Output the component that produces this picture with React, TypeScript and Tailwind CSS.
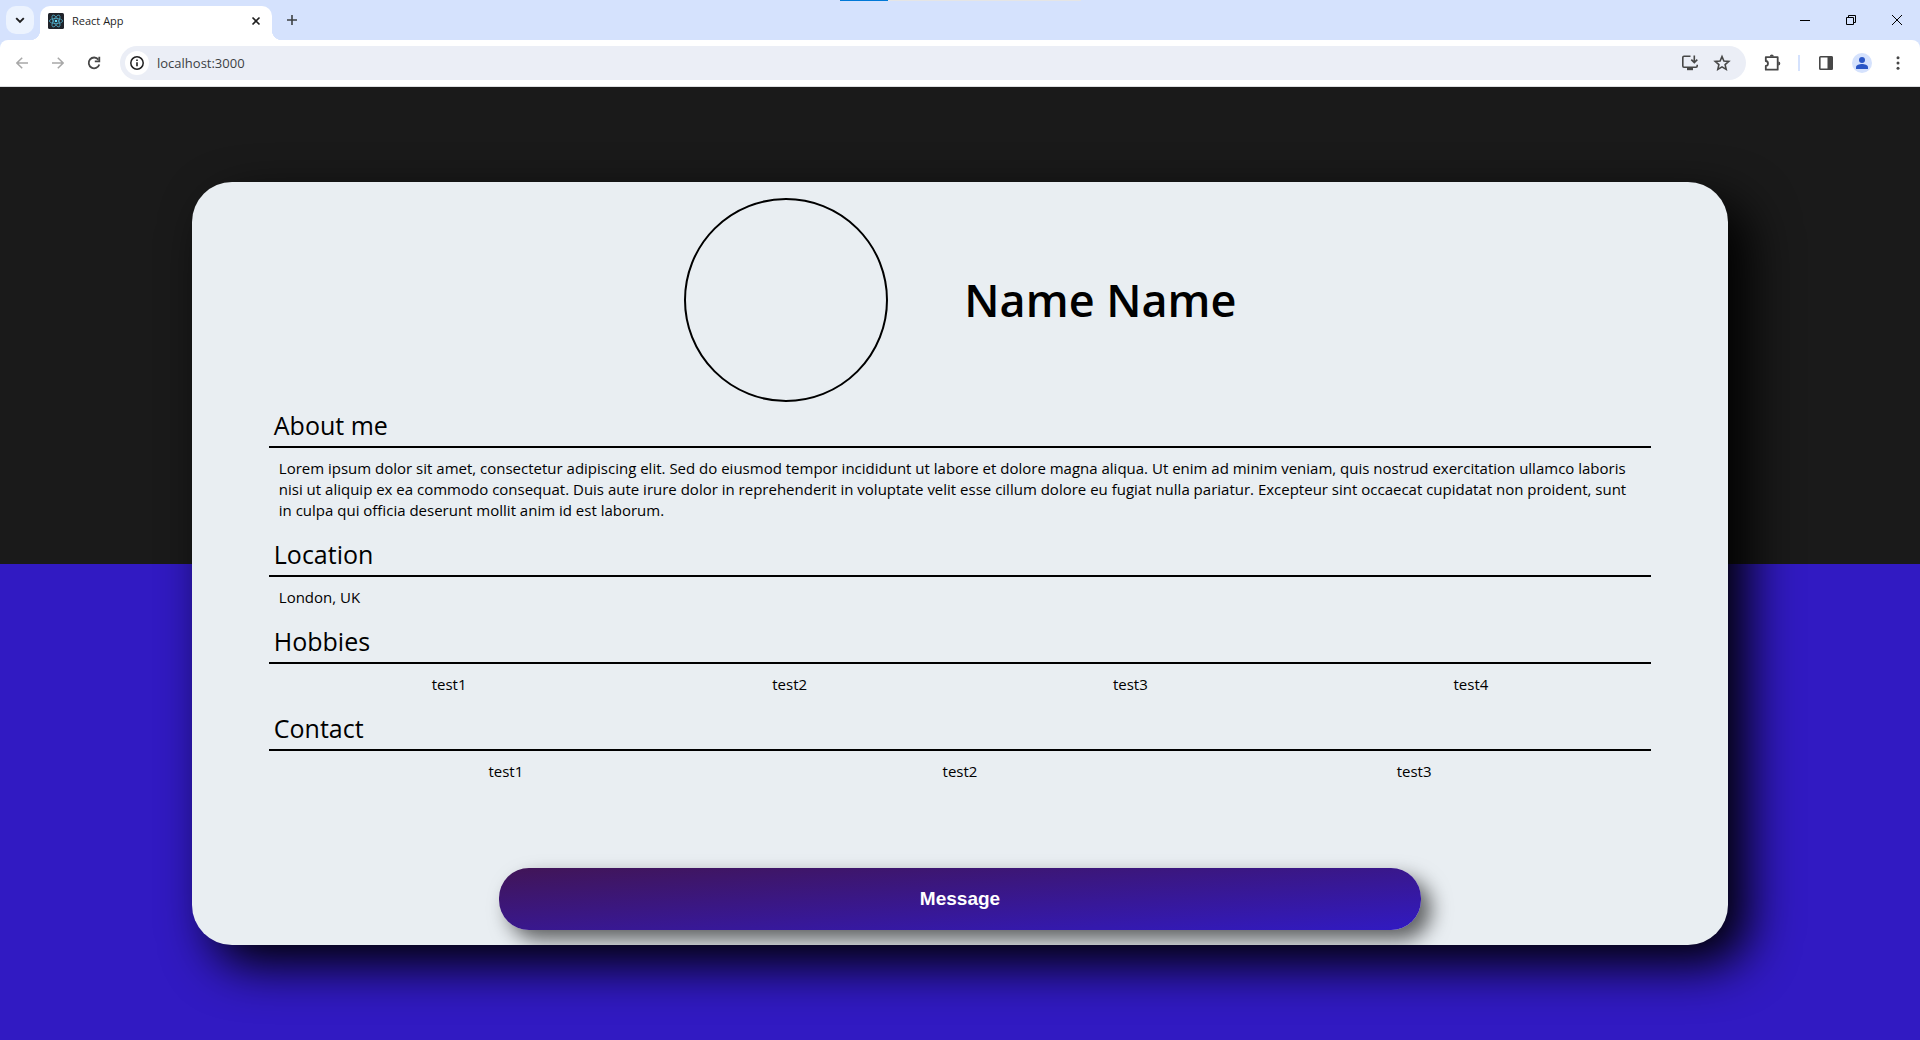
import type { ReactNode } from "react";

const hobbies = ["test1", "test2", "test3", "test4"];
const contacts = ["test1", "test2", "test3"];

function ReactLogo() {
  return (
    <svg className="size-4 shrink-0" viewBox="0 0 16 16" fill="none" aria-hidden="true">
      <rect width="16" height="16" rx="1.5" fill="#20232a" />
      <g stroke="#4fa9c4" strokeWidth="0.8">
        <ellipse cx="8" cy="8" rx="6.6" ry="2.6" />
        <ellipse cx="8" cy="8" rx="6.6" ry="2.6" transform="rotate(60 8 8)" />
        <ellipse cx="8" cy="8" rx="6.6" ry="2.6" transform="rotate(120 8 8)" />
      </g>
      <circle cx="8" cy="8" r="1.3" fill="#61dafb" />
    </svg>
  );
}

function TabStrip() {
  return (
    <div className="relative flex h-10 items-end bg-[#d5e2fd] pl-1.5">
      <div className="absolute top-0 left-[840px] flex h-px w-[241px] bg-[#e5e5e5]">
        <span className="w-12 bg-[#0078d7]" />
      </div>
      <button aria-label="Search tabs" className="mb-1.5 flex size-7 items-center justify-center rounded-[10px] bg-[#ecf3fe]">
        <svg className="size-3" viewBox="0 0 12 12" fill="none" stroke="#1f1f1f" strokeWidth="1.9" aria-hidden="true">
          <path d="M2.2 4.2 6 8l3.8-3.8" />
        </svg>
      </button>
      <div className="relative ml-1.5 flex h-[34px] w-[232px] items-center rounded-t-[10px] bg-white pr-2 pb-1 pl-2">
        <span className="absolute bottom-0 -left-2.5 size-2.5 bg-[radial-gradient(circle_at_0_0,transparent_10px,#fff_10.5px)]" />
        <span className="absolute -right-2.5 bottom-0 size-2.5 bg-[radial-gradient(circle_at_100%_0,transparent_10px,#fff_10.5px)]" />
        <ReactLogo />
        <span className="ml-2 flex-1 text-[11px] leading-4 text-[#1f1f1f]">React App</span>
        <button aria-label="Close tab" className="flex size-4 items-center justify-center">
          <svg className="size-2.5" viewBox="0 0 10 10" stroke="#1f1f1f" strokeWidth="1.6" aria-hidden="true">
            <path d="M1.5 1.5l7 7M8.5 1.5l-7 7" />
          </svg>
        </button>
      </div>
      <button aria-label="New tab" className="mb-1.5 ml-1.5 flex size-7 items-center justify-center">
        <svg className="size-3" viewBox="0 0 12 12" stroke="#3c4043" strokeWidth="1.6" aria-hidden="true">
          <path d="M6 1v10M1 6h10" />
        </svg>
      </button>
      <div className="ml-auto flex h-10 text-black">
        <button aria-label="Minimize" className="flex w-[46px] items-center justify-center">
          <svg className="size-2.5" viewBox="0 0 10 10" fill="currentColor" aria-hidden="true">
            <path d="M0 5h10v1H0z" />
          </svg>
        </button>
        <button aria-label="Restore" className="flex w-[46px] items-center justify-center">
          <svg className="size-2.5" viewBox="0 0 10 10" fill="none" stroke="currentColor" aria-hidden="true">
            <path d="M.5 2.5h7v7h-7zM2.5 2.5v-2h7v7h-2" />
          </svg>
        </button>
        <button aria-label="Close" className="flex w-[46px] items-center justify-center">
          <svg className="size-2.5" viewBox="0 0 10 10" stroke="currentColor" aria-hidden="true">
            <path d="M0 0l10 10M10 0L0 10" />
          </svg>
        </button>
      </div>
    </div>
  );
}

function ToolButton({ label, className, children }: { label: string; className: string; children: ReactNode }) {
  return (
    <button aria-label={label} className={`flex h-[34px] shrink-0 items-center justify-center ${className}`}>
      {children}
    </button>
  );
}

function Toolbar() {
  return (
    <div className="bg-[#d5e2fd]">
      <div className="flex h-[47px] items-center rounded-t-lg border-b border-[#dcdee1] bg-white px-1 text-[#474747]">
        <ToolButton label="Back" className="w-9 text-[#a8a8a8]">
          <svg className="size-3" viewBox="0 0 12 12" fill="none" stroke="currentColor" strokeWidth="1.5" aria-hidden="true">
            <path d="M12 6H1M6.2.7.9 6l5.3 5.3" />
          </svg>
        </ToolButton>
        <ToolButton label="Forward" className="w-9 text-[#a8a8a8]">
          <svg className="size-3" viewBox="0 0 12 12" fill="none" stroke="currentColor" strokeWidth="1.5" aria-hidden="true">
            <path d="M0 6h11M5.8.7 11.1 6l-5.3 5.3" />
          </svg>
        </ToolButton>
        <ToolButton label="Reload" className="w-9">
          <svg className="size-4" viewBox="0 0 16 16" fill="none" stroke="currentColor" strokeWidth="1.8" aria-hidden="true">
            <path d="M12.4 4.6A5.4 5.4 0 1 0 13.3 9.5" />
            <path d="M13.3 1.8V6.3H8.8" />
          </svg>
        </ToolButton>
        <div className="ml-2 flex h-[34px] flex-1 items-center rounded-full bg-[#ebeef6] pr-2 pl-[5px]">
          <button aria-label="View site information" className="flex size-6 items-center justify-center rounded-full bg-white">
            <svg className="size-4" viewBox="0 0 16 16" fill="none" aria-hidden="true">
              <circle cx="8" cy="8" r="6.2" stroke="#1f1f1f" strokeWidth="1.5" />
              <path d="M8 7.2v4M8 4.500v1.600" stroke="#1f1f1f" strokeWidth="1.6" />
            </svg>
          </button>
          <input
            aria-label="Address"
            defaultValue="localhost:3000"
            className="ml-2 h-6 min-w-0 flex-1 bg-transparent text-[13px] text-[#3c3f44] outline-none"
          />
          <ToolButton label="Install app" className="w-8">
            <svg className="size-[18px]" viewBox="0 0 18 18" fill="none" stroke="currentColor" strokeWidth="1.6" aria-hidden="true">
              <path d="M9.5 2.3H3Q1.8 2.3 1.8 3.5V12Q1.8 13.2 3 13.2H15Q16.2 13.2 16.2 12V10.7" />
              <path d="M6 15h6" strokeWidth="2.4" />
              <path d="M13.3 1.5V8.3M10.3 5.6l3 3 3-3" />
            </svg>
          </ToolButton>
          <ToolButton label="Bookmark this tab" className="w-8">
            <svg className="size-[18px]" viewBox="0 0 18 18" fill="none" stroke="currentColor" strokeWidth="1.6" aria-hidden="true">
              <path d="M9 2.600l1.900 4.400 4.900.4-3.700 3.200 1.100 4.800L9 12.900l-4.200 2.500 1.100-4.800-3.700-3.200 4.900-.4z" />
            </svg>
          </ToolButton>
        </div>
        <ToolButton label="Extensions" className="ml-2 w-9">
          <svg className="size-[18px]" viewBox="0 0 18 18" aria-hidden="true">
            <path
              d="M2.8 3.200H14.700V15.700H2.800V12C5.700 11.700 5.700 7.300 2.800 7Z"
              fill="none"
              stroke="currentColor"
              strokeWidth="1.8"
              strokeLinejoin="round"
            />
            <path d="M6.800 2.600a2 2 0 0 1 4 0zM15.300 7.400a2 2 0 0 1 0 4z" fill="currentColor" />
          </svg>
        </ToolButton>
        <span className="mx-2 h-4 w-0.5 bg-[#d5e2fd]" />
        <ToolButton label="Side panel" className="w-9">
          <svg className="size-4" viewBox="0 0 16 16" aria-hidden="true">
            <rect x="1.8" y="1.8" width="12.4" height="12.4" rx="0.8" fill="none" stroke="currentColor" strokeWidth="1.6" />
            <path d="M9.5 1.500h5v13h-5z" fill="currentColor" />
          </svg>
        </ToolButton>
        <ToolButton label="Profile" className="w-9">
          <svg className="size-5" viewBox="0 0 20 20" fill="#2a56c6" aria-hidden="true">
            <circle cx="10" cy="10" r="10" fill="#d5e2fd" />
            <circle cx="10" cy="7" r="3" />
            <path d="M4 15.900v-1.700c0-2 3.500-3.200 6-3.200s6 1.200 6 3.200v1.700z" />
          </svg>
        </ToolButton>
        <ToolButton label="Menu" className="w-9">
          <svg className="size-4" viewBox="0 0 16 16" fill="currentColor" aria-hidden="true">
            <circle cx="8" cy="2.7" r="1.5" />
            <circle cx="8" cy="8" r="1.5" />
            <circle cx="8" cy="13.3" r="1.5" />
          </svg>
        </ToolButton>
      </div>
    </div>
  );
}

function Section({ title, children }: { title: string; children: ReactNode }) {
  return (
    <section className="mx-[5%]">
      <h2 className="border-b-2 border-black px-[5px] pt-[7px] pb-[5px] text-[25px] leading-8">{title}</h2>
      <div className="p-2.5 text-[15px] leading-[21px]">{children}</div>
    </section>
  );
}

export default function App() {
  return (
    <div className="flex min-h-screen flex-col font-['Open_Sans','Noto_Sans',sans-serif]">
      <header>
        <TabStrip />
        <Toolbar />
      </header>
      <main className="flex flex-1 flex-col bg-[linear-gradient(#1a1a1a_50%,#311ac2_50%)] py-[95px]">
        <article className="mx-[10%] flex flex-1 flex-col overflow-hidden rounded-[40px] bg-[#e9eef2] text-black shadow-[20px_20px_50px_#000]">
          <div className="flex items-center justify-center gap-[5%] pt-4">
            <div className="size-[204px] rounded-full border-2 border-black" />
            <h1 className="text-[45px] leading-[64px] font-semibold">Name Name</h1>
          </div>
          <Section title="About me">
            <p>
              Lorem ipsum dolor sit amet, consectetur adipiscing elit. Sed do eiusmod tempor incididunt ut labore et
              dolore magna aliqua. Ut enim ad minim veniam, quis nostrud exercitation ullamco laboris nisi ut aliquip ex
              ea commodo consequat. Duis aute irure dolor in reprehenderit in voluptate velit esse cillum dolore eu
              fugiat nulla pariatur. Excepteur sint occaecat cupidatat non proident, sunt in culpa qui officia deserunt
              mollit anim id est laborum.
            </p>
          </Section>
          <Section title="Location">
            <p>London, UK</p>
          </Section>
          <Section title="Hobbies">
            <ul className="grid grid-cols-4 text-center">
              {hobbies.map((hobby) => (
                <li key={hobby}>{hobby}</li>
              ))}
            </ul>
          </Section>
          <Section title="Contact">
            <ul className="grid grid-cols-3 text-center">
              {contacts.map((contact) => (
                <li key={contact}>{contact}</li>
              ))}
            </ul>
          </Section>
          <button className="mx-auto mt-auto mb-[15px] w-3/5 rounded-[30px] bg-[linear-gradient(to_bottom_right,#411557,#311ac2)] py-5 font-['Liberation_Sans',Arial,sans-serif] text-[19px] leading-[22px] font-bold text-white shadow-[10px_10px_20px_rgba(0,0,0,0.6)]">
            Message
          </button>
        </article>
      </main>
    </div>
  );
}
